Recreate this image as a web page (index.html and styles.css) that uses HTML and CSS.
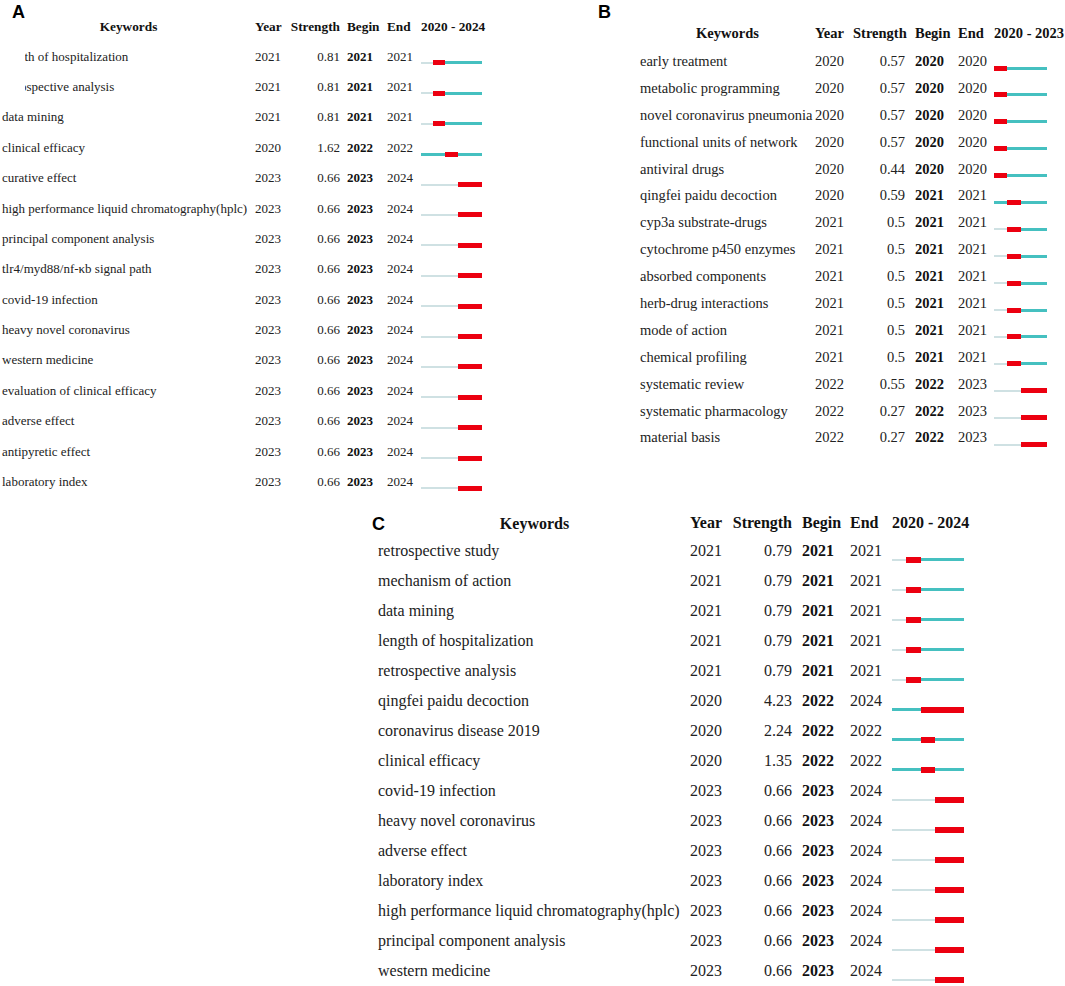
FILE: index.html
```html
<!DOCTYPE html>
<html lang="en">
<head>
<meta charset="utf-8">
<title>Keyword bursts</title>
<link rel="stylesheet" href="styles.css">
</head>
<body>
<div class="figure">
  <div class="top">
    <section class="panel panel-a">
      <div class="label">A</div>
      <div class="table">
        <div class="h kw">Keywords</div><div class="h">Year</div><div class="h num">Strength</div><div class="h begin">Begin</div><div class="h">End</div><div class="h">2020 - 2024</div>

        <div class="kw clip">length of hospitalization</div><div>2021</div><div class="num">0.81</div><div class="begin">2021</div><div>2021</div>
        <div class="bar"><span class="seg pre" style="grid-column:1/2"></span><span class="seg post" style="grid-column:2/6"></span><span class="seg hot" style="grid-column:2/3"></span></div>

        <div class="kw clip">retrospective analysis</div><div>2021</div><div class="num">0.81</div><div class="begin">2021</div><div>2021</div>
        <div class="bar"><span class="seg pre" style="grid-column:1/2"></span><span class="seg post" style="grid-column:2/6"></span><span class="seg hot" style="grid-column:2/3"></span></div>

        <div class="kw">data mining</div><div>2021</div><div class="num">0.81</div><div class="begin">2021</div><div>2021</div>
        <div class="bar"><span class="seg pre" style="grid-column:1/2"></span><span class="seg post" style="grid-column:2/6"></span><span class="seg hot" style="grid-column:2/3"></span></div>

        <div class="kw">clinical efficacy</div><div>2020</div><div class="num">1.62</div><div class="begin">2022</div><div>2022</div>
        <div class="bar"><span class="seg post" style="grid-column:1/6"></span><span class="seg hot" style="grid-column:3/4"></span></div>

        <div class="kw">curative effect</div><div>2023</div><div class="num">0.66</div><div class="begin">2023</div><div>2024</div>
        <div class="bar"><span class="seg pre" style="grid-column:1/4"></span><span class="seg hot" style="grid-column:4/6"></span></div>

        <div class="kw">high performance liquid chromatography(hplc)</div><div>2023</div><div class="num">0.66</div><div class="begin">2023</div><div>2024</div>
        <div class="bar"><span class="seg pre" style="grid-column:1/4"></span><span class="seg hot" style="grid-column:4/6"></span></div>

        <div class="kw">principal component analysis</div><div>2023</div><div class="num">0.66</div><div class="begin">2023</div><div>2024</div>
        <div class="bar"><span class="seg pre" style="grid-column:1/4"></span><span class="seg hot" style="grid-column:4/6"></span></div>

        <div class="kw">tlr4/myd88/nf-κb signal path</div><div>2023</div><div class="num">0.66</div><div class="begin">2023</div><div>2024</div>
        <div class="bar"><span class="seg pre" style="grid-column:1/4"></span><span class="seg hot" style="grid-column:4/6"></span></div>

        <div class="kw">covid-19 infection</div><div>2023</div><div class="num">0.66</div><div class="begin">2023</div><div>2024</div>
        <div class="bar"><span class="seg pre" style="grid-column:1/4"></span><span class="seg hot" style="grid-column:4/6"></span></div>

        <div class="kw">heavy novel coronavirus</div><div>2023</div><div class="num">0.66</div><div class="begin">2023</div><div>2024</div>
        <div class="bar"><span class="seg pre" style="grid-column:1/4"></span><span class="seg hot" style="grid-column:4/6"></span></div>

        <div class="kw">western medicine</div><div>2023</div><div class="num">0.66</div><div class="begin">2023</div><div>2024</div>
        <div class="bar"><span class="seg pre" style="grid-column:1/4"></span><span class="seg hot" style="grid-column:4/6"></span></div>

        <div class="kw">evaluation of clinical efficacy</div><div>2023</div><div class="num">0.66</div><div class="begin">2023</div><div>2024</div>
        <div class="bar"><span class="seg pre" style="grid-column:1/4"></span><span class="seg hot" style="grid-column:4/6"></span></div>

        <div class="kw">adverse effect</div><div>2023</div><div class="num">0.66</div><div class="begin">2023</div><div>2024</div>
        <div class="bar"><span class="seg pre" style="grid-column:1/4"></span><span class="seg hot" style="grid-column:4/6"></span></div>

        <div class="kw">antipyretic effect</div><div>2023</div><div class="num">0.66</div><div class="begin">2023</div><div>2024</div>
        <div class="bar"><span class="seg pre" style="grid-column:1/4"></span><span class="seg hot" style="grid-column:4/6"></span></div>

        <div class="kw">laboratory index</div><div>2023</div><div class="num">0.66</div><div class="begin">2023</div><div>2024</div>
        <div class="bar"><span class="seg pre" style="grid-column:1/4"></span><span class="seg hot" style="grid-column:4/6"></span></div>
      </div>
    </section>

    <section class="panel panel-b">
      <div class="label">B</div>
      <div class="table">
        <div class="h kw">Keywords</div><div class="h">Year</div><div class="h num">Strength</div><div class="h begin">Begin</div><div class="h">End</div><div class="h">2020 - 2023</div>

        <div class="kw">early treatment</div><div>2020</div><div class="num">0.57</div><div class="begin">2020</div><div>2020</div>
        <div class="bar"><span class="seg post" style="grid-column:1/5"></span><span class="seg hot" style="grid-column:1/2"></span></div>

        <div class="kw">metabolic programming</div><div>2020</div><div class="num">0.57</div><div class="begin">2020</div><div>2020</div>
        <div class="bar"><span class="seg post" style="grid-column:1/5"></span><span class="seg hot" style="grid-column:1/2"></span></div>

        <div class="kw">novel coronavirus pneumonia</div><div>2020</div><div class="num">0.57</div><div class="begin">2020</div><div>2020</div>
        <div class="bar"><span class="seg post" style="grid-column:1/5"></span><span class="seg hot" style="grid-column:1/2"></span></div>

        <div class="kw">functional units of network</div><div>2020</div><div class="num">0.57</div><div class="begin">2020</div><div>2020</div>
        <div class="bar"><span class="seg post" style="grid-column:1/5"></span><span class="seg hot" style="grid-column:1/2"></span></div>

        <div class="kw">antiviral drugs</div><div>2020</div><div class="num">0.44</div><div class="begin">2020</div><div>2020</div>
        <div class="bar"><span class="seg post" style="grid-column:1/5"></span><span class="seg hot" style="grid-column:1/2"></span></div>

        <div class="kw">qingfei paidu decoction</div><div>2020</div><div class="num">0.59</div><div class="begin">2021</div><div>2021</div>
        <div class="bar"><span class="seg post" style="grid-column:1/5"></span><span class="seg hot" style="grid-column:2/3"></span></div>

        <div class="kw">cyp3a substrate-drugs</div><div>2021</div><div class="num">0.5</div><div class="begin">2021</div><div>2021</div>
        <div class="bar"><span class="seg pre" style="grid-column:1/2"></span><span class="seg post" style="grid-column:2/5"></span><span class="seg hot" style="grid-column:2/3"></span></div>

        <div class="kw">cytochrome p450 enzymes</div><div>2021</div><div class="num">0.5</div><div class="begin">2021</div><div>2021</div>
        <div class="bar"><span class="seg pre" style="grid-column:1/2"></span><span class="seg post" style="grid-column:2/5"></span><span class="seg hot" style="grid-column:2/3"></span></div>

        <div class="kw">absorbed components</div><div>2021</div><div class="num">0.5</div><div class="begin">2021</div><div>2021</div>
        <div class="bar"><span class="seg pre" style="grid-column:1/2"></span><span class="seg post" style="grid-column:2/5"></span><span class="seg hot" style="grid-column:2/3"></span></div>

        <div class="kw">herb-drug interactions</div><div>2021</div><div class="num">0.5</div><div class="begin">2021</div><div>2021</div>
        <div class="bar"><span class="seg pre" style="grid-column:1/2"></span><span class="seg post" style="grid-column:2/5"></span><span class="seg hot" style="grid-column:2/3"></span></div>

        <div class="kw">mode of action</div><div>2021</div><div class="num">0.5</div><div class="begin">2021</div><div>2021</div>
        <div class="bar"><span class="seg pre" style="grid-column:1/2"></span><span class="seg post" style="grid-column:2/5"></span><span class="seg hot" style="grid-column:2/3"></span></div>

        <div class="kw">chemical profiling</div><div>2021</div><div class="num">0.5</div><div class="begin">2021</div><div>2021</div>
        <div class="bar"><span class="seg pre" style="grid-column:1/2"></span><span class="seg post" style="grid-column:2/5"></span><span class="seg hot" style="grid-column:2/3"></span></div>

        <div class="kw">systematic review</div><div>2022</div><div class="num">0.55</div><div class="begin">2022</div><div>2023</div>
        <div class="bar"><span class="seg pre" style="grid-column:1/3"></span><span class="seg hot" style="grid-column:3/5"></span></div>

        <div class="kw">systematic pharmacology</div><div>2022</div><div class="num">0.27</div><div class="begin">2022</div><div>2023</div>
        <div class="bar"><span class="seg pre" style="grid-column:1/3"></span><span class="seg hot" style="grid-column:3/5"></span></div>

        <div class="kw">material basis</div><div>2022</div><div class="num">0.27</div><div class="begin">2022</div><div>2023</div>
        <div class="bar"><span class="seg pre" style="grid-column:1/3"></span><span class="seg hot" style="grid-column:3/5"></span></div>
      </div>
    </section>
  </div>

  <section class="panel panel-c">
    <div class="table">
      <div class="h kw"><span class="label">C</span><span class="kw-title">Keywords</span></div><div class="h">Year</div><div class="h num">Strength</div><div class="h begin">Begin</div><div class="h">End</div><div class="h">2020 - 2024</div>

      <div class="kw">retrospective study</div><div>2021</div><div class="num">0.79</div><div class="begin">2021</div><div>2021</div>
      <div class="bar"><span class="seg pre" style="grid-column:1/2"></span><span class="seg post" style="grid-column:2/6"></span><span class="seg hot" style="grid-column:2/3"></span></div>

      <div class="kw">mechanism of action</div><div>2021</div><div class="num">0.79</div><div class="begin">2021</div><div>2021</div>
      <div class="bar"><span class="seg pre" style="grid-column:1/2"></span><span class="seg post" style="grid-column:2/6"></span><span class="seg hot" style="grid-column:2/3"></span></div>

      <div class="kw">data mining</div><div>2021</div><div class="num">0.79</div><div class="begin">2021</div><div>2021</div>
      <div class="bar"><span class="seg pre" style="grid-column:1/2"></span><span class="seg post" style="grid-column:2/6"></span><span class="seg hot" style="grid-column:2/3"></span></div>

      <div class="kw">length of hospitalization</div><div>2021</div><div class="num">0.79</div><div class="begin">2021</div><div>2021</div>
      <div class="bar"><span class="seg pre" style="grid-column:1/2"></span><span class="seg post" style="grid-column:2/6"></span><span class="seg hot" style="grid-column:2/3"></span></div>

      <div class="kw">retrospective analysis</div><div>2021</div><div class="num">0.79</div><div class="begin">2021</div><div>2021</div>
      <div class="bar"><span class="seg pre" style="grid-column:1/2"></span><span class="seg post" style="grid-column:2/6"></span><span class="seg hot" style="grid-column:2/3"></span></div>

      <div class="kw">qingfei paidu decoction</div><div>2020</div><div class="num">4.23</div><div class="begin">2022</div><div>2024</div>
      <div class="bar"><span class="seg post" style="grid-column:1/6"></span><span class="seg hot" style="grid-column:3/6"></span></div>

      <div class="kw">coronavirus disease 2019</div><div>2020</div><div class="num">2.24</div><div class="begin">2022</div><div>2022</div>
      <div class="bar"><span class="seg post" style="grid-column:1/6"></span><span class="seg hot" style="grid-column:3/4"></span></div>

      <div class="kw">clinical efficacy</div><div>2020</div><div class="num">1.35</div><div class="begin">2022</div><div>2022</div>
      <div class="bar"><span class="seg post" style="grid-column:1/6"></span><span class="seg hot" style="grid-column:3/4"></span></div>

      <div class="kw">covid-19 infection</div><div>2023</div><div class="num">0.66</div><div class="begin">2023</div><div>2024</div>
      <div class="bar"><span class="seg pre" style="grid-column:1/4"></span><span class="seg hot" style="grid-column:4/6"></span></div>

      <div class="kw">heavy novel coronavirus</div><div>2023</div><div class="num">0.66</div><div class="begin">2023</div><div>2024</div>
      <div class="bar"><span class="seg pre" style="grid-column:1/4"></span><span class="seg hot" style="grid-column:4/6"></span></div>

      <div class="kw">adverse effect</div><div>2023</div><div class="num">0.66</div><div class="begin">2023</div><div>2024</div>
      <div class="bar"><span class="seg pre" style="grid-column:1/4"></span><span class="seg hot" style="grid-column:4/6"></span></div>

      <div class="kw">laboratory index</div><div>2023</div><div class="num">0.66</div><div class="begin">2023</div><div>2024</div>
      <div class="bar"><span class="seg pre" style="grid-column:1/4"></span><span class="seg hot" style="grid-column:4/6"></span></div>

      <div class="kw">high performance liquid chromatography(hplc)</div><div>2023</div><div class="num">0.66</div><div class="begin">2023</div><div>2024</div>
      <div class="bar"><span class="seg pre" style="grid-column:1/4"></span><span class="seg hot" style="grid-column:4/6"></span></div>

      <div class="kw">principal component analysis</div><div>2023</div><div class="num">0.66</div><div class="begin">2023</div><div>2024</div>
      <div class="bar"><span class="seg pre" style="grid-column:1/4"></span><span class="seg hot" style="grid-column:4/6"></span></div>

      <div class="kw">western medicine</div><div>2023</div><div class="num">0.66</div><div class="begin">2023</div><div>2024</div>
      <div class="bar"><span class="seg pre" style="grid-column:1/4"></span><span class="seg hot" style="grid-column:4/6"></span></div>
    </div>
  </section>
</div>
</body>
</html>
```

FILE: styles.css
```css
html, body {
  margin: 0;
  padding: 0;
  background: #ffffff;
}

body {
  font-family: "Liberation Serif", "Times New Roman", serif;
  color: #222222;
}

.figure {
  width: 1065px;
  height: 986px;
  overflow: hidden;
}

.top {
  display: flex;
  align-items: flex-start;
}

.label {
  font-family: "Liberation Sans", Arial, sans-serif;
  font-weight: bold;
  font-size: 18px;
  line-height: 18px;
  color: #000000;
}

.table {
  display: grid;
  align-items: center;
  white-space: nowrap;
}

.h {
  font-weight: bold;
  align-self: start;
  color: #111111;
}

.h.kw {
  text-align: center;
}

.num {
  text-align: right;
}

.begin {
  font-weight: bold;
  color: #111111;
}

.clip {
  clip-path: inset(0 0 0 23px);
}

/* timeline bars */
.bar {
  display: grid;
  grid-template-columns: repeat(5, 1fr);
  align-items: center;
  align-self: center;
}

.seg {
  grid-row: 1;
  display: block;
}

.pre {
  height: 2px;
  background: #cfe1e3;
}

.post {
  height: 3px;
  background: #45c0c0;
}

.hot {
  height: 5px;
  background: #ec0010;
}

/* Panel A */
.panel-a {
  width: 500px;
  flex: none;
}

.panel-a .label {
  margin: 3px 0 0 12px;
}

.panel-a .table {
  margin-left: 2px;
  font-size: 13px;
  grid-template-columns: 253px 35px 50px 47px 34px 61px;
  grid-template-rows: 20.4px;
  grid-auto-rows: 30.4px;
}

.panel-a .h {
  font-size: 13.3px;
  line-height: 12px;
}

.panel-a .begin {
  padding-left: 7px;
}

.panel-a .bar {
  margin-top: 12.8px;
}

/* Panel B */
.panel-b {
  margin-left: 98px;
  flex: none;
}

.panel-b .label {
  margin-top: 3px;
}

.panel-b .table {
  margin-left: 42px;
  font-size: 14.5px;
  grid-template-columns: 175px 38px 52px 53px 36px 53px;
  grid-template-rows: 27px;
  grid-auto-rows: 26.9px;
}

.panel-b .h {
  line-height: 12px;
  padding-top: 6px;
}

.panel-b .begin {
  padding-left: 10px;
}

.panel-b .bar {
  grid-template-columns: repeat(4, 1fr);
  margin-top: 13.2px;
}

/* Panel C */
.panel-c {
  margin-left: 372px;
}

.panel-c .table {
  margin-left: 6px;
  font-size: 16px;
  grid-template-columns: 312px 40px 62px 58px 42px 72px;
  grid-template-rows: 38.8px;
  grid-auto-rows: 30px;
}

.panel-c .h {
  line-height: 16px;
  padding-top: 17.6px;
}

.panel-c .h.kw {
  display: flex;
  align-items: center;
  margin-left: -6px;
}

.panel-c .kw-title {
  flex: 1;
  text-align: center;
  padding-right: 6px;
}

.panel-c .begin {
  padding-left: 10px;
}

.panel-c .bar {
  margin-top: 17.6px;
}

.panel-c .hot {
  height: 6px;
}
```
